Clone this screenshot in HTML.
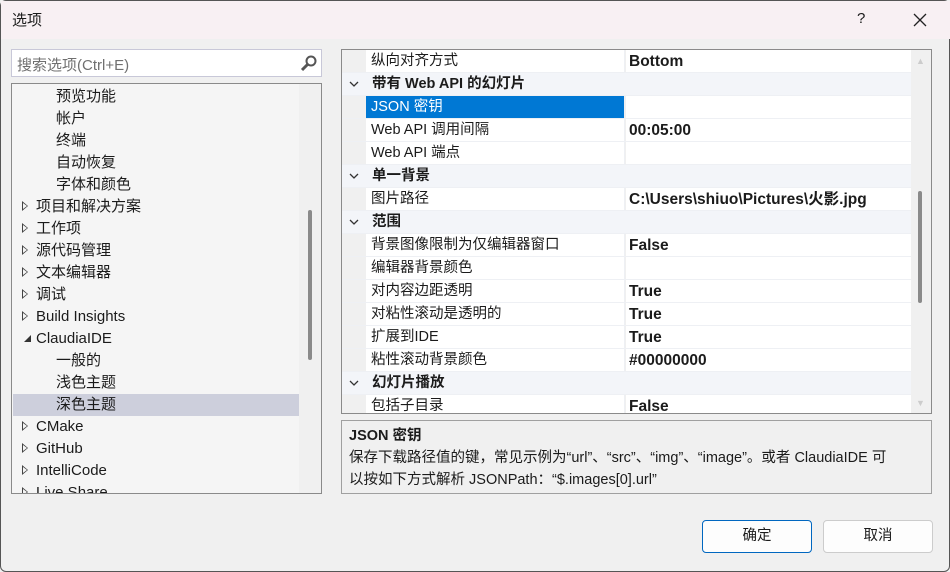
<!DOCTYPE html><html><head><meta charset="utf-8"><style>
*{margin:0;padding:0;box-sizing:border-box}
body{width:950px;height:572px;background:#f0f0f0;font-family:"Liberation Sans","Noto Sans CJK SC",sans-serif;font-size:14.5px;color:#1b1b1b;position:relative;overflow:hidden;border:1px solid #555;border-radius:6px}
.title{position:absolute;left:0;top:0;width:950px;height:38px;background:#f8f0f3}
.abs{position:absolute}
.tree div{position:absolute;height:22px;line-height:22px;white-space:nowrap}
.tri{display:inline-block;width:0;height:0;border-top:5px solid transparent;border-bottom:5px solid transparent;border-left:6px solid #444;margin-right:8px;vertical-align:0px;position:relative}
.tri:after{content:"";position:absolute;left:-5px;top:-3px;border-top:3px solid transparent;border-bottom:3px solid transparent;border-left:4px solid #f5f5f5}
.pg div.r{position:absolute;left:0;width:569px;height:23px;line-height:23px;border-bottom:1px solid #eef0f4}
.cat{background:#f3f5f9;font-weight:bold}
.nm{position:absolute;left:24px;width:259px;height:22px;padding-left:5px;background:#fff;border-right:1px solid #eef0f4}
.vl{position:absolute;left:284px;right:0;height:22px;padding-left:3px;background:#fff;font-weight:bold;font-size:15.5px}
.chev{position:absolute;left:6px;top:8px}
.btn{position:absolute;top:519px;width:110px;height:33px;background:#fdfdfd;border:1px solid #ccc;border-radius:4px;text-align:center;line-height:31px}
</style></head><body>
<div class="title"></div>
<div class="abs" style="left:11px;top:8px;font-size:15px">选项</div>
<div class="abs" style="left:856px;top:9px;font-size:15px">?</div>
<svg class="abs" style="left:912px;top:12px" width="14" height="14"><path d="M1 1L13 13M13 1L1 13" stroke="#222" stroke-width="1.3"/></svg>
<div class="abs" style="left:10px;top:48px;width:311px;height:28px;background:#fff;border:1px solid #c8c8d8"></div>
<div class="abs" style="left:16px;top:53px;color:#707070;font-size:15px">搜索选项(Ctrl+E)</div>
<svg class="abs" style="left:299px;top:53px" width="18" height="18"><circle cx="11" cy="7" r="4.5" fill="none" stroke="#555" stroke-width="2"/><path d="M8 10L2 16" stroke="#555" stroke-width="3"/></svg>
<div class="abs tree" style="left:10px;top:82px;width:311px;height:411px;background:#f5f5f5;border:1px solid #8a8a8a;overflow:hidden;font-size:15px">
<div style="left:44px;top:2px">预览功能</div><div style="left:44px;top:24px">帐户</div><div style="left:44px;top:46px">终端</div><div style="left:44px;top:68px">自动恢复</div><div style="left:44px;top:90px">字体和颜色</div>
<div style="left:10px;top:112px"><i class="tri"></i>项目和解决方案</div><div style="left:10px;top:134px"><i class="tri"></i>工作项</div><div style="left:10px;top:156px"><i class="tri"></i>源代码管理</div><div style="left:10px;top:178px"><i class="tri"></i>文本编辑器</div><div style="left:10px;top:200px"><i class="tri"></i>调试</div><div style="left:10px;top:222px"><i class="tri"></i>Build Insights</div>
<div style="left:10px;top:244px"><svg width="14" height="12" style="margin-right:0px;vertical-align:-1px"><path d="M2 10L9 3V10Z" fill="#333"/></svg>ClaudiaIDE</div>
<div style="left:44px;top:266px">一般的</div><div style="left:44px;top:288px">浅色主题</div>
<div style="left:1px;top:310px;width:286px;background:#cdcfdc;padding-left:43px">深色主题</div>
<div style="left:10px;top:332px"><i class="tri"></i>CMake</div><div style="left:10px;top:354px"><i class="tri"></i>GitHub</div><div style="left:10px;top:376px"><i class="tri"></i>IntelliCode</div><div style="left:10px;top:398px"><i class="tri"></i>Live Share</div>
<div style="left:287px;top:0;width:22px;height:411px;background:#f0f0f0"></div>
<div style="left:296px;top:126px;width:4px;height:150px;background:#8a8a8a;border-radius:2px"></div>
</div>
<div class="abs pg" style="left:340px;top:48px;width:591px;height:365px;background:#f0f0f0;border:1px solid #8a8a8a;overflow:hidden">
<div class="r" style="top:0"><span class="nm">纵向对齐方式</span><span class="vl">Bottom</span></div>
<div class="r cat" style="top:23px"><svg class="chev" width="12" height="8"><path d="M2 1L6 5L10 1" fill="none" stroke="#333" stroke-width="1.3"/></svg><span style="position:absolute;left:30px">带有 Web API 的幻灯片</span></div>
<div class="r" style="top:46px"><span class="nm" style="background:#0078d4;color:#fff">JSON 密钥</span><span class="vl"></span></div>
<div class="r" style="top:69px"><span class="nm">Web API 调用间隔</span><span class="vl">00:05:00</span></div>
<div class="r" style="top:92px"><span class="nm">Web API 端点</span><span class="vl"></span></div>
<div class="r cat" style="top:115px"><svg class="chev" width="12" height="8"><path d="M2 1L6 5L10 1" fill="none" stroke="#333" stroke-width="1.3"/></svg><span style="position:absolute;left:30px">单一背景</span></div>
<div class="r" style="top:138px"><span class="nm">图片路径</span><span class="vl">C:\Users\shiuo\Pictures\火影.jpg</span></div>
<div class="r cat" style="top:161px"><svg class="chev" width="12" height="8"><path d="M2 1L6 5L10 1" fill="none" stroke="#333" stroke-width="1.3"/></svg><span style="position:absolute;left:30px">范围</span></div>
<div class="r" style="top:184px"><span class="nm">背景图像限制为仅编辑器窗口</span><span class="vl">False</span></div>
<div class="r" style="top:207px"><span class="nm">编辑器背景颜色</span><span class="vl"></span></div>
<div class="r" style="top:230px"><span class="nm">对内容边距透明</span><span class="vl">True</span></div>
<div class="r" style="top:253px"><span class="nm">对粘性滚动是透明的</span><span class="vl">True</span></div>
<div class="r" style="top:276px"><span class="nm">扩展到IDE</span><span class="vl">True</span></div>
<div class="r" style="top:299px"><span class="nm">粘性滚动背景颜色</span><span class="vl">#00000000</span></div>
<div class="r cat" style="top:322px"><svg class="chev" width="12" height="8"><path d="M2 1L6 5L10 1" fill="none" stroke="#333" stroke-width="1.3"/></svg><span style="position:absolute;left:30px">幻灯片播放</span></div>
<div class="r" style="top:345px"><span class="nm">包括子目录</span><span class="vl">False</span></div>
<div style="position:absolute;left:569px;top:0;width:21px;height:365px;background:#f0f0f0"></div>
<div style="position:absolute;left:576px;top:141px;width:4px;height:112px;background:#8a8a8a;border-radius:2px"></div>
<div style="position:absolute;left:574px;top:6px;font-size:9px;color:#ccc">▲</div>
<div style="position:absolute;left:574px;top:348px;font-size:9px;color:#ccc">▼</div>
</div>
<div class="abs" style="left:340px;top:419px;width:591px;height:74px;border:1px solid #a0a0a0;background:#f0f0f0;padding:4px 7px;line-height:22px;white-space:nowrap">
<div style="font-weight:bold">JSON 密钥</div>
<div>保存下载路径值的键，常见示例为“url”、“src”、“img”、“image”。或者 ClaudiaIDE 可<br>以按如下方式解析 JSONPath：“$.images[0].url”</div></div>
<div class="btn" style="left:701px;border:1px solid #0067c0">确定</div>
<div class="btn" style="left:822px">取消</div>
</body></html>
